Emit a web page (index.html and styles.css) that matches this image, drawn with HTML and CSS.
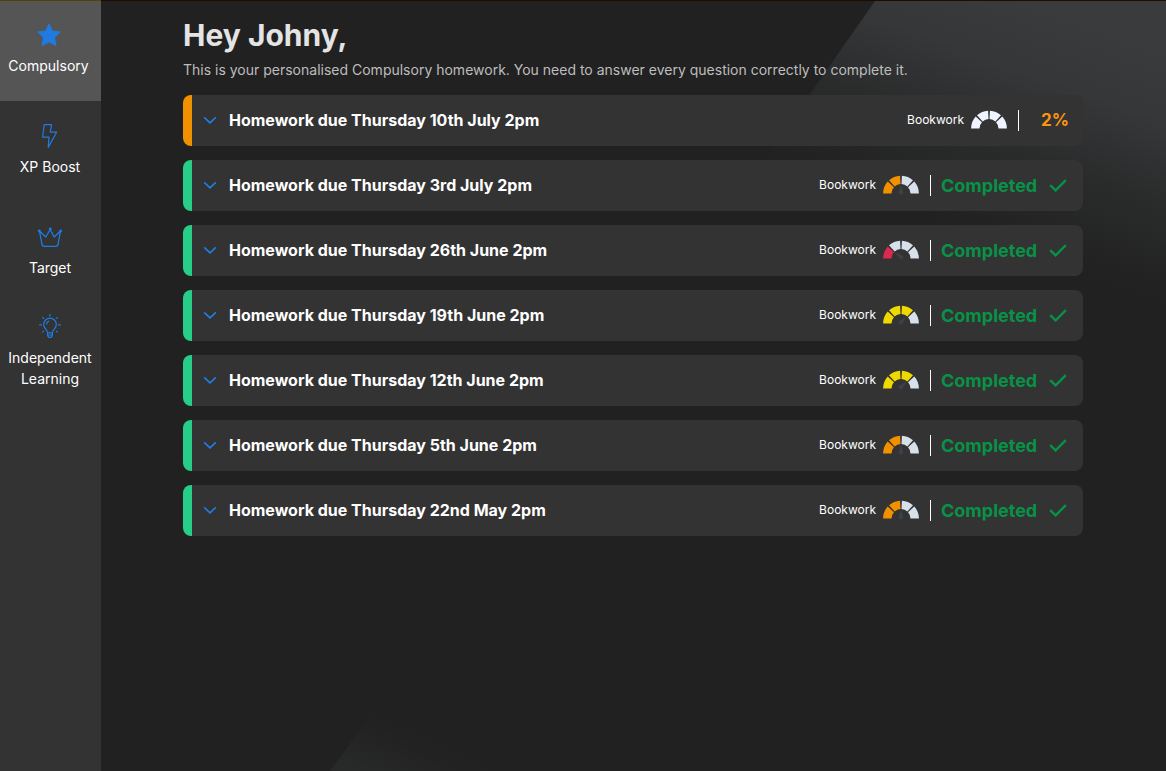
FILE: index.html
```html
<!DOCTYPE html>
<html lang="en">
<head>
<meta charset="utf-8">
<meta name="viewport" content="width=device-width, initial-scale=1">
<title>Homework</title>
<link rel="stylesheet" href="styles.css">
</head>
<body>
<svg class="defs" aria-hidden="true">
  <symbol id="gauge" viewBox="0 0 36 20">
    <g fill="none" stroke-width="8.4">
      <path class="g1" d="M4.3 18.5A13.7 13.7 0 0 1 7.82 9.33"/>
      <path class="g2" d="M8.83 8.32A13.7 13.7 0 0 1 17.28 4.82"/>
      <path class="g3" d="M18.72 4.82A13.7 13.7 0 0 1 27.17 8.32"/>
      <path class="g4" d="M28.18 9.33A13.7 13.7 0 0 1 31.7 18.5"/>
    </g>
    <path class="needle" d="M18 9L20.2 17.2A2.2 2.2 0 1 1 15.8 17.2Z"/>
  </symbol>
  <symbol id="chevron" viewBox="0 0 14 8"><path d="M1.2 1.4L7 6.9L12.8 1.4" fill="none" stroke="#1f7fe8" stroke-width="1.5"/></symbol>
  <symbol id="tick" viewBox="0 0 18 13"><path d="M1.2 6.2L6.6 11.4L16.8 1.2" fill="none" stroke="#079247" stroke-width="2.4"/></symbol>
</svg>
<div class="page">
  <nav class="sidebar" aria-label="Homework sections">
    <a class="tab active" href="#compulsory">
      <svg class="tab-icon star" viewBox="0 0 24 24"><path fill="#1f7be0" stroke="#1f7be0" stroke-width="1" stroke-linejoin="round" d="M12 .8L15.4 8L23.3 9L17.5 14.5L19 22.6L12 18.8L5 22.6L6.5 14.5L.7 9L8.6 8Z"/></svg>
      <span>Compulsory</span>
    </a>
    <a class="tab" href="#xp-boost">
      <svg class="tab-icon" viewBox="0 0 24 24"><path fill="none" stroke="#1f7be0" stroke-width="1.2" stroke-linejoin="round" d="M6.2 .6H13.6L12.2 8.2H18.6L10.2 23.4L11 13.2H4.6Z"/></svg>
      <span>XP Boost</span>
    </a>
    <a class="tab" href="#target">
      <svg class="tab-icon" viewBox="0 0 24 24"><g fill="none" stroke="#1f7be0" stroke-width="1.3" stroke-linejoin="round"><path d="M1.5 6L4 19.5Q4.4 21.3 6.2 21.3H17.8Q19.6 21.3 20 19.5L22.5 6L16.2 12L12.2 4.5L7.8 12Z"/></g><g fill="#1f7be0"><circle cx="1.3" cy="6" r="1.4"/><circle cx="12.2" cy="4" r="1.4"/><circle cx="22.7" cy="6" r="1.4"/></g></svg>
      <span>Target</span>
    </a>
    <a class="tab" href="#independent-learning">
      <svg class="tab-icon" viewBox="0 0 24 24"><g fill="none" stroke="#1f7be0" stroke-width="1.2" stroke-linejoin="round"><path d="M9.6 17.8Q9.4 15.6 7.4 13.8A6.3 6.3 0 1 1 16.6 13.8Q14.6 15.6 14.4 17.8Z"/><path d="M9.6 17.8V20.6L10.8 22.4H13.2L14.4 20.6V17.8M9.6 20H14.4M8.4 9.4Q8.7 6.6 11.2 6M12 -1V1.4M1.2 9.8H4M20 9.8H22.8M4.4 2.2L6 3.8M19.6 2.2L18 3.8M4.4 17.4L6 15.8M19.6 17.4L18 15.8"/></g></svg>
      <span>Independent Learning</span>
    </a>
  </nav>
  <main class="content">
    <h1>Hey Johny,</h1>
    <p class="intro">This is your personalised Compulsory homework. You need to answer every question correctly to complete it.</p>
    <ul class="list">
      <li><button class="row current" type="button"><svg class="chevron"><use href="#chevron"/></svg><span class="title">Homework due Thursday 10th July 2pm</span><span class="label">Bookwork</span><svg class="gauge none"><use href="#gauge"/></svg><span class="percent">2%</span></button></li>
      <li><button class="row" type="button"><svg class="chevron"><use href="#chevron"/></svg><span class="title">Homework due Thursday 3rd July 2pm</span><span class="label">Bookwork</span><svg class="gauge mid"><use href="#gauge"/></svg><span class="done">Completed<svg class="tick"><use href="#tick"/></svg></span></button></li>
      <li><button class="row" type="button"><svg class="chevron"><use href="#chevron"/></svg><span class="title">Homework due Thursday 26th June 2pm</span><span class="label">Bookwork</span><svg class="gauge low"><use href="#gauge"/></svg><span class="done">Completed<svg class="tick"><use href="#tick"/></svg></span></button></li>
      <li><button class="row" type="button"><svg class="chevron"><use href="#chevron"/></svg><span class="title">Homework due Thursday 19th June 2pm</span><span class="label">Bookwork</span><svg class="gauge high"><use href="#gauge"/></svg><span class="done">Completed<svg class="tick"><use href="#tick"/></svg></span></button></li>
      <li><button class="row" type="button"><svg class="chevron"><use href="#chevron"/></svg><span class="title">Homework due Thursday 12th June 2pm</span><span class="label">Bookwork</span><svg class="gauge high"><use href="#gauge"/></svg><span class="done">Completed<svg class="tick"><use href="#tick"/></svg></span></button></li>
      <li><button class="row" type="button"><svg class="chevron"><use href="#chevron"/></svg><span class="title">Homework due Thursday 5th June 2pm</span><span class="label">Bookwork</span><svg class="gauge mid"><use href="#gauge"/></svg><span class="done">Completed<svg class="tick"><use href="#tick"/></svg></span></button></li>
      <li><button class="row" type="button"><svg class="chevron"><use href="#chevron"/></svg><span class="title">Homework due Thursday 22nd May 2pm</span><span class="label">Bookwork</span><svg class="gauge mid"><use href="#gauge"/></svg><span class="done">Completed<svg class="tick"><use href="#tick"/></svg></span></button></li>
    </ul>
  </main>
</div>
</body>
</html>
```
FILE: styles.css
```css
* { box-sizing: border-box; }
body {
  margin: 0;
  background: #212121;
  color: #fff;
  font-family: Inter, "Open Sans", sans-serif;
}
.defs { position: absolute; width: 0; height: 0; }
.page { display: flex; min-height: 100vh; }

.sidebar { flex: 0 0 101px; background: #333; }
.tab {
  display: flex;
  flex-direction: column;
  align-items: center;
  justify-content: center;
  gap: 8px;
  min-height: 101px;
  padding: 0 1px 3px 0;
  color: #fff;
  font-size: 14px;
  line-height: 21px;
  text-align: center;
  text-decoration: none;
}
.tab.active { background: #555; border-top: 1px solid #544300; padding-right: 4px; }
.tab-icon { width: 24px; height: 24px; overflow: visible; }

.content {
  position: relative;
  z-index: 0;
  flex: 1;
  padding: 16px 83px 32px 82px;
  border-top: 1px solid #1f0b00;
  overflow: hidden;
}
/* Angled light panels behind the list */
.content::before,
.content::after { content: ""; position: absolute; z-index: -1; }
.content::before {
  top: 0;
  right: 0;
  width: 400px;
  height: 340px;
  background: linear-gradient(200deg, #3a3b3d 10%, #363739 25%, #2a2b2b 42%, #212121 62%);
  clip-path: polygon(109px 0, 100% 0, 100% 100%, 0 100%, 0 156px);
}
.content::after {
  left: 229px;
  bottom: 0;
  width: 160px;
  height: 56px;
  background: linear-gradient(205deg, #212121 42%, #292a2a 100%);
  clip-path: polygon(0 100%, 41px 0, 100% 100%);
}

h1 { margin: 0; font-size: 30px; line-height: 36px; font-weight: 700; color: #e4e4e4; }
.intro { margin: 7px 0 15px; font-size: 14px; line-height: 20px; font-weight: 400; color: #bdbdbd; }
.list { display: flex; flex-direction: column; gap: 14px; margin: 0; padding: 0; list-style: none; }
.row {
  display: flex;
  align-items: center;
  width: 100%;
  min-height: 51px;
  padding: 0 16px 1px 11px;
  border: 0;
  border-left: 9px solid #27ce88;
  border-radius: 8px;
  background: #333;
  color: #fff;
  font: inherit;
  text-align: left;
}
.row.current { border-left-color: #f29100; padding-right: 14px; }
.chevron { flex: none; width: 14px; height: 8px; }
.title { flex: 1; margin-left: 12px; font-size: 16px; line-height: 24px; font-weight: 700; }
.label { font-size: 12px; line-height: 16px; }
.gauge {
  --a: #d8e0ec; --b: #d8e0ec; --c: #d8e0ec; --d: #d8e0ec;
  --needle: #3d4045; --turn: 0deg;
  flex: none;
  width: 36px;
  height: 20px;
  margin: 0 11px 0 7px;
}
.g1 { stroke: var(--a); }
.g2 { stroke: var(--b); }
.g3 { stroke: var(--c); }
.g4 { stroke: var(--d); }
.needle { fill: var(--needle); transform: rotate(var(--turn)); transform-origin: 18px 17px; }
.none { --a: #f0f4fe; --b: #f0f4fe; --c: #f0f4fe; --d: #f0f4fe; --needle: transparent; }
.low { --a: #dc2a4f; --turn: -55deg; }
.mid { --a: #f29100; --b: #f29100; }
.high { --a: #efd900; --b: #efd900; --c: #efd900; --turn: 50deg; }
.percent, .done {
  display: flex;
  align-items: center;
  border-left: 1px solid #fff;
  font-size: 18px;
  line-height: 21px;
  font-weight: 700;
}
.percent { width: 51px; justify-content: flex-end; color: #ff9310; font-size: 17px; }
.done { width: 137px; justify-content: space-between; padding-left: 10px; color: #079247; }
.tick { width: 18px; height: 13px; }
```
